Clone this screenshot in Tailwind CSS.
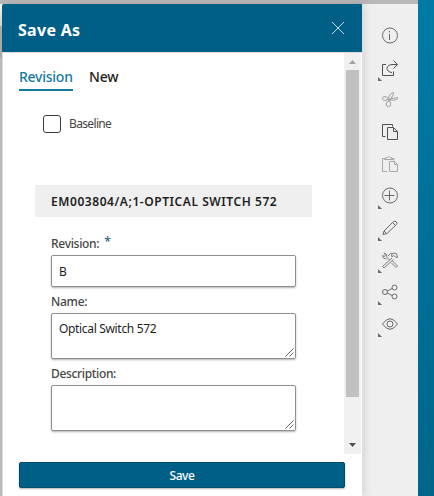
<!DOCTYPE html>
<html lang="en">
<head>
<meta charset="utf-8">
<title>Save As</title>
<script src="https://cdn.jsdelivr.net/npm/@tailwindcss/browser@4"></script>
</head>
<body class="w-[434px] h-[496px] overflow-hidden bg-[#efefef] font-['Noto_Sans',sans-serif] text-[12px] text-[#1e1e1e]">
<div class="flex h-[496px] w-[434px]">
  <div class="flex w-[418px] flex-col">
    <div class="h-1 shrink-0 bg-[#b9b9b9]"></div>
    <div class="flex h-[492px]">
      <div class="flex w-[2px] shrink-0 flex-col bg-[#c0c0c0]">
        <div class="h-[22px] bg-gradient-to-b from-white to-[#d8d8d8]"></div>
        <div class="h-8 bg-[#b0b0b0]"></div>
      </div>
      <main class="z-10 flex w-[360px] shrink-0 flex-col rounded-tl-[2px] bg-white shadow-[2px_0_10px_rgba(0,0,0,0.13)]">
        <header class="flex h-12 shrink-0 items-center justify-between rounded-tl-[2px] bg-[#005f87] pl-4 pr-[17px] text-white">
          <h1 class="pt-[3px] text-[16px] font-bold leading-6 tracking-[0.3px]">Save As</h1>
          <svg class="size-[14px]" viewBox="0 0 14 14" fill="none" stroke="#c5dbe5" stroke-width="1"><path d="M1 1l12 12M13 1L1 13"/></svg>
        </header>
        <div class="flex h-[402px] shrink-0 border-l border-t border-[#dedede]">
          <div class="w-[341px] pt-[13px]">
            <nav class="flex gap-[17px] pl-4 text-[14px] font-medium leading-[22px]">
              <div class="h-[25px] w-[54px] whitespace-nowrap border-b-2 border-[#147a9e] tracking-[-0.25px] text-[#147a9e]">Revision</div>
              <div class="-ml-px tracking-[-0.2px]">New</div>
            </nav>
            <div class="mt-6 flex h-[18px] items-center gap-2 pl-10 text-[#464646]">
              <div class="size-[18px] rounded-[3px] border border-[#3c3c3c]"></div>
              <span class="text-[12px] tracking-[-0.65px]">Baseline</span>
            </div>
            <h2 class="ml-8 mt-[52px] h-8 w-[277px] whitespace-nowrap bg-[#efefef] pl-4 text-[12px] font-semibold leading-[33px] tracking-[0.56px]">EM003804/A;1-OPTICAL SWITCH 572</h2>
            <div class="ml-12 w-[245px] text-[12px]">
              <div class="flex h-[38px] items-end gap-[5px] font-medium leading-[23px] tracking-[-0.3px] text-[#464646]"><span>Revision:</span><span class="pb-[2px] text-[12px] text-[#1d5f83]">*</span></div>
              <div class="h-8 rounded-[2px] border border-[#8f8f8f] pl-[7px] leading-[32px] shadow-[0_1px_2px_rgba(0,0,0,0.3)]">B</div>
              <div class="h-[26px] pt-[3px] font-medium leading-[24px] tracking-[-0.3px] text-[#464646]">Name:</div>
              <div class="flex h-[46px] items-end justify-between rounded-[2px] border border-[#8f8f8f] pb-px pl-[7px] pr-px shadow-[0_1px_2px_rgba(0,0,0,0.3)]">
                <span class="self-start pt-[6px] leading-[18px] tracking-[-0.33px]">Optical Switch 572</span>
                <svg class="size-[9px]" viewBox="0 0 9 9" stroke="#555" stroke-width=".9"><path d="M.5 8.5l8-8M4.5 8.5l4-4"/></svg>
              </div>
              <div class="h-[26px] pt-[3px] font-medium leading-[24px] tracking-[-0.34px] text-[#464646]">Description:</div>
              <div class="flex h-[46px] items-end justify-end rounded-[2px] border border-[#8f8f8f] pb-px pr-px shadow-[0_1px_2px_rgba(0,0,0,0.3)]">
                <svg class="size-[9px]" viewBox="0 0 9 9" stroke="#555" stroke-width=".9"><path d="M.5 8.5l8-8M4.5 8.5l4-4"/></svg>
              </div>
            </div>
          </div>
          <div class="flex w-[17px] flex-col items-center bg-[#f0f0f0]">
            <svg class="h-[17px] w-[17px] shrink-0" viewBox="0 0 17 17"><path d="M5 11l3.5-4L12 11z" fill="#a1a1a1"/></svg>
            <div class="h-[327px] w-[13px] bg-[#c1c1c1]"></div>
            <svg class="mt-auto h-[17px] w-[17px] shrink-0" viewBox="0 0 17 17"><path d="M5 6h7l-3.5 4z" fill="#505050"/></svg>
          </div>
        </div>
        <footer class="flex flex-1 border-l border-[#dedede] pl-4 pt-2">
          <button class="h-[26px] w-[326px] rounded-[2px] border border-[#004b6b] bg-[#005f87] text-[12px] leading-[25px] tracking-[-0.45px] font-medium text-white shadow-[0_1px_2px_rgba(0,0,0,0.3)]">Save</button>
        </footer>
      </main>
      <aside class="flex w-[56px] flex-col bg-[#efefef] pl-[16px] pt-[16px]">
        <svg class="h-[320px] w-[28px]" viewBox="378 20 28 320" fill="none" stroke="#686868" stroke-width="1">
          <g><circle cx="390" cy="35.5" r="7.5"/><path d="M389.5 34v6M389.5 31v1.5"/></g>
          <path stroke="#505050" d="M386 64.5h-3.500v11h11v-4M397 64.500h-4a5.500 4 0 0 0-1 8M393.500 60.500l4 4-4 4"/>
          <g stroke="#a2a2a2"><ellipse cx="385" cy="98.500" rx="2.500" ry="2"/><ellipse cx="388.500" cy="104" rx="2.300" ry="2.700"/><path d="M387.500 99.500l10-2v1.500q-3 2-7 1l-3-.5M388.500 101.500l.5-5q2-4 4.500-4v1.500l-4 7.500"/></g>
          <path d="M385.500 136.500h-3v-12h10v2M387.500 127.500h6l4 4v8h-10zM393.500 127.500v4h4" stroke="#505050"/>
          <path d="M387 171.500h-4.500v-13h3M391 158.500h3v2M384.500 159.500q0-2 3-2 1.500-2 3 0 2 0 2.500 2zM389.500 161.500h5l3 3v7h-8zM394.500 161.500v3h3" stroke="#a8a8a8"/>
          <g><circle cx="390" cy="195.500" r="7.500"/><path d="M384.500 195.500h10M389.500 190.500v10"/></g>
          <path d="M383 234.500l1-3.500 9.500-9.500q1.500-1 3 .5 1 1.500 0 2.500l-9.500 9zM384 231l3 3M392.500 222.500l3 3"/>
          <g stroke-width=".85"><path d="M387 257.500l2.500 2.500M391.500 263l4.500 4.500 1.500-1.500-5-5M392 258l-9.500 8.500 1.500 1.500 9.500-8.500M387 257.500q.5-4-3-4.500l1.500 2-1 1.500-2-1q0 3.500 4 3.500M388 256l3-3 1.500 1M391.500 255l1.500-2 3.500.5 1 4-2-.5-2-1.500-1.500 1.500z"/></g>
          <g><circle cx="385" cy="292" r="2.500"/><circle cx="394.500" cy="287.500" r="2.500"/><circle cx="394.500" cy="296.500" r="2.500"/><path d="M387.300 290.900l4.900-2.400M387.300 293.100l4.900 2.400"/></g>
          <g><path d="M382.500 324q7.500-10.500 15 0-7.500 10.500-15 0z"/><circle cx="390" cy="324" r="3"/></g>
          <path d="M378 77v4h4zM378 205v4h4zM378 237v4h4zM378 269v4h4zM378 301v4h4zM378 333v4h4z" fill="#6a6a6a" stroke="none"/>
        </svg>
      </aside>
    </div>
  </div>
  <div class="w-4 bg-gradient-to-b from-[#007ba5] to-[#00658a]"></div>
</div>
</body>
</html>
